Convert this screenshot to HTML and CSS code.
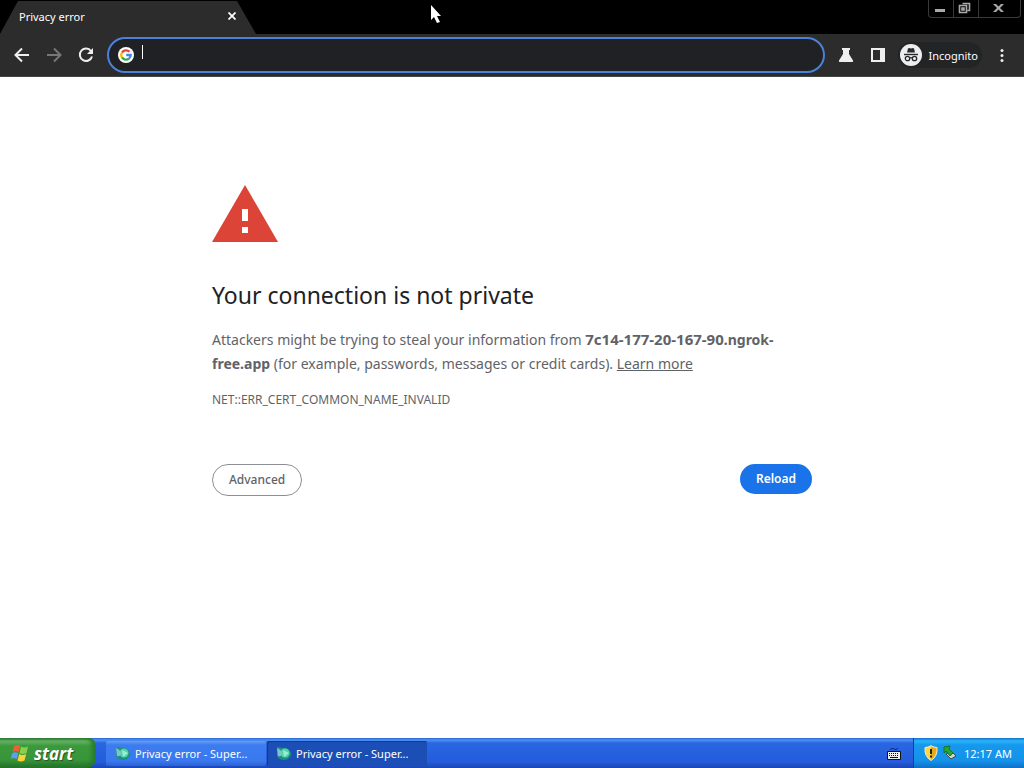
FILE: index.html
```html
<!DOCTYPE html>
<html lang="en">
<head>
<meta charset="utf-8">
<title>Privacy error</title>
<link rel="stylesheet" href="styles.css">
</head>
<body class="desktop">
<header class="tab-strip">
  <div class="tab">
    <span class="tab-title">Privacy error</span>
    <button class="tab-close" aria-label="Close tab"><svg width="8" height="8" viewBox="0 0 8 8"><path d="M.5.5l7 7M7.5.5l-7 7" stroke="#fff" stroke-width="1.7"/></svg></button>
  </div>
  <div class="window-controls">
    <button class="win-btn" aria-label="Minimize"><svg width="24" height="16" viewBox="0 0 24 16"><path d="M6 9h10v3H6z" fill="#aaa"/></svg></button>
    <button class="win-btn" aria-label="Restore"><svg width="24" height="16" viewBox="0 0 24 16"><path d="M8.500 3.500h7v7h-2M5.500 5.500h7v7h-7zM8 8h2v2H8z" fill="none" stroke="#aaa" stroke-width="1.6"/></svg></button>
    <button class="win-btn win-close" aria-label="Close"><svg width="41" height="16" viewBox="0 0 41 16"><path d="M14 4h3l2.500 2.500L22 4h3l-4 4 4 4h-3l-2.500-2.500L17 12h-3l4-4z" fill="#aaa"/></svg></button>
  </div>
</header>
<nav class="toolbar">
  <button class="tool" aria-label="Back"><svg width="24" height="24" viewBox="0 0 24 24"><path d="M19 12H6M12 5.500L5.500 12l6.500 6.500" fill="none" stroke="#eee" stroke-width="2"/></svg></button>
  <button class="tool" aria-label="Forward"><svg width="24" height="24" viewBox="0 0 24 24"><path d="M5 12h13M12 5.500l6.500 6.500-6.500 6.500" fill="none" stroke="#777" stroke-width="2"/></svg></button>
  <button class="tool" aria-label="Reload page"><svg width="24" height="24" viewBox="0 0 24 24"><path d="M17 8A6.200 6.200 0 1 0 18 13.500" fill="none" stroke="#eee" stroke-width="2"/><path d="M19 5v6h-6z" fill="#eee"/></svg></button>
  <label class="omnibox">
    <svg class="google" width="16" height="16" viewBox="0 0 16 16"><circle cx="8" cy="8" r="8" fill="#fff"/><g fill="none" stroke-width="2.300"><path d="M11.500 4.800A4.700 4.700 0 0 0 4 5.600" stroke="#ea4335"/><path d="M4 5.500a4.700 4.700 0 0 0 0 5" stroke="#fbbc05"/><path d="M4 10.400a4.700 4.700 0 0 0 7 1.200" stroke="#34a853"/><path d="M11 11.600A4.700 4.700 0 0 0 12.700 8H8.200" stroke="#4285f4"/></g></svg>
    <input class="address" type="text" aria-label="Address and search bar" autofocus>
    <span class="caret"></span>
  </label>
  <button class="tool" aria-label="Experiments"><svg width="24" height="24" viewBox="0 0 24 24"><path d="M8 5h8v2h-1v4l4 6.500q.7 1.500-1 1.500H6q-1.700 0-1-1.500L9 11V7H8z" fill="#eee"/></svg></button>
  <button class="tool" aria-label="Side panel"><svg width="24" height="24" viewBox="0 0 24 24"><path d="M5 5h14v14H5zM7 7v10h7V7z" fill="#eee" fill-rule="evenodd"/></svg></button>
  <button class="profile">
    <svg width="22" height="22" viewBox="0 0 22 22"><circle cx="11" cy="11" r="11" fill="#eee"/><path d="M8 4.500l1-.5 2 .5 2-.5 1 .5 1 4H7z" fill="#292a2d"/><path d="M4 10.500h14" stroke="#292a2d" stroke-width="1.400"/><g fill="none" stroke="#292a2d" stroke-width="1.300"><circle cx="7.500" cy="14.500" r="2.200"/><circle cx="14.500" cy="14.500" r="2.200"/><path d="M9.700 14q1.300-.7 2.600 0"/></g></svg>
    <span>Incognito</span>
  </button>
  <button class="tool menu" aria-label="Menu"><svg width="24" height="24" viewBox="0 0 24 24" fill="#eee"><circle cx="12" cy="7.500" r="1.500"/><circle cx="12" cy="12.500" r="1.500"/><circle cx="12" cy="17.500" r="1.500"/></svg></button>
</nav>
<main class="page">
  <div class="interstitial">
    <svg class="warning" width="66" height="57" viewBox="0 0 66 57"><path d="M33 0l33 57H0z" fill="#db4437"/><path d="M30 24h6v12h-6zM30 42h6v6h-6z" fill="#fff"/></svg>
    <h1 class="heading">Your connection is not private</h1>
    <p class="message">Attackers might be trying to steal your information from <strong><span class="host-id">7c14-177-20-167-90</span>.ngrok-free.app</strong> (for example, passwords, messages or credit cards). <a class="learn" href="#">Learn more</a></p>
    <p class="code">NET::ERR_CERT_COMMON_NAME_INVALID</p>
    <div class="actions">
      <button class="pill secondary">Advanced</button>
      <button class="pill primary">Reload</button>
    </div>
  </div>
</main>
<footer class="taskbar">
  <button class="start">
    <svg width="20" height="20" viewBox="0 0 20 20"><path d="M4 3q4-2 6 0L8.500 9q-3-2-6 0z" fill="#ee6032"/><path d="M11 3.500q3 2 7 0L16.500 10q-4 2-7 0z" fill="#8bd04a"/><path d="M2.200 10.200q3-2 6 0L6.700 16q-3-2-6 0z" fill="#609cf0"/><path d="M9.200 11q3 2 7 0L14.500 17.500q-4 2-7 0z" fill="#f8d33c"/></svg>
    <span>start</span>
  </button>
  <div class="tasks">
    <button class="task"><svg width="16" height="16" viewBox="0 0 16 16"><path d="M1 1q3 0 5 1 5-1 8 3 2 3 1 4-2 5-7 5-5 0-7-4z" fill="#1d8f80"/><circle cx="9" cy="7" r="4.500" fill="#4fd2ae"/><path d="M7 4l6 3-5 4z" fill="#96f0cf"/><path d="M1 2q5 2 5 6-1 3-4 2z" fill="#7fc4c8"/></svg><span>Privacy error - Super...</span></button>
    <button class="task active"><svg width="16" height="16" viewBox="0 0 16 16"><path d="M1 1q3 0 5 1 5-1 8 3 2 3 1 4-2 5-7 5-5 0-7-4z" fill="#1d8f80"/><circle cx="9" cy="7" r="4.500" fill="#4fd2ae"/><path d="M7 4l6 3-5 4z" fill="#96f0cf"/><path d="M1 2q5 2 5 6-1 3-4 2z" fill="#7fc4c8"/></svg><span>Privacy error - Super...</span></button>
  </div>
  <button class="keyboard" aria-label="Keyboard"><svg width="14" height="14" viewBox="0 0 14 14"><path d="M3 3q2-3 4-1t4-1" fill="none" stroke="#172a62"/><path d="M.5 4.500h13v8H.5z" fill="#eee" stroke="#111"/><path d="M2 6.500h10M2 8.500h10" stroke="#111" stroke-dasharray="1 1"/><path d="M3 10.500h8" stroke="#111"/></svg></button>
  <div class="tray">
    <svg width="14" height="16" viewBox="0 0 14 16"><path d="M7 .7Q10 2.500 13 2.500q.8 9-6 13-6.800-4-6-13Q4 2.500 7 .7z" fill="#ffd640" stroke="#f2edcf"/><path d="M7 1.500q3 1.500 5.500 1.500 0 8-5.500 12z" fill="#e5a91b"/><path d="M6 4h2v5H6zM6 10.500h2v2H6z" fill="#222"/></svg>
    <svg width="14" height="16" viewBox="0 0 14 16"><path d="M3 9l5 5 5-3-4-4z" fill="#cdd5cf" stroke="#3d4a56"/><path d="M1 2l6-1-1 3 4 4-3 3-4-5-2 2z" fill="#28a62f" stroke="#147428"/></svg>
    <time class="clock">12:17 AM</time>
  </div>
</footer>
<svg class="cursor" width="12" height="20" viewBox="0 0 12 20"><path d="M1 1v15l3-3 3 6 3-1-3-6h4z" fill="#fff"/></svg>
</body>
</html>
```
FILE: styles.css
```css
* { box-sizing: border-box; }
.desktop {
  margin: 0;
  min-height: 100vh;
  display: flex;
  flex-direction: column;
  background: #fff;
  font-family: "Noto Sans", sans-serif;
}
button { border: 0; padding: 0; background: none; font: inherit; color: inherit; }
svg { display: block; flex: none; }

.tab-strip {
  display: flex;
  justify-content: space-between;
  align-items: flex-start;
  height: 34px;
  background: #000;
}
.tab {
  display: flex;
  align-items: center;
  justify-content: space-between;
  width: 256px;
  height: 34px;
  padding: 0 16px 2px 19px;
  background: #2c2c2c;
  clip-path: polygon(18px 1px, 237px 1px, 256px 34px, 0 34px);
  color: #fff;
  font-size: 11px;
}
.tab-close { padding: 4px; }
.window-controls {
  display: flex;
  height: 18px;
  margin-right: 3px;
  border: 1px solid #3a3a3a;
  border-top: 0;
  border-radius: 0 0 4px 4px;
}
.win-btn { display: flex; }
.win-btn + .win-btn { border-left: 1px solid #3a3a3a; }

.toolbar {
  display: flex;
  align-items: center;
  gap: 8px;
  height: 43px;
  padding: 0 10px;
  background: #2c2c2c;
  border-bottom: 1px solid #444;
  color: #fff;
}
.omnibox {
  position: relative;
  flex: 1;
  display: flex;
  align-items: center;
  gap: 8px;
  height: 36px;
  margin: 0 1px;
  padding: 0 9px;
  border: 2px solid #4b82d8;
  border-radius: 18px;
  background: #202124;
}
.address {
  flex: 1;
  min-width: 0;
  border: 0;
  outline: 0;
  padding: 0;
  background: none;
  color: #fff;
  caret-color: transparent;
  font: inherit;
  font-size: 14px;
}
.caret {
  position: absolute;
  left: 33px;
  top: 6px;
  width: 1px;
  height: 14px;
  background: #fff;
}
.profile {
  display: flex;
  align-items: center;
  gap: 7px;
  height: 26px;
  padding: 0 4px 0 2px;
  border-radius: 13px;
  background: #232426;
  font-size: 11px;
}

.page {
  flex: 1;
  padding: 108px 24px 48px;
}
.interstitial {
  max-width: 600px;
  margin: 0 auto;
  color: #5f6368;
}
.heading {
  margin: 37px 0 16px;
  color: #202124;
  font-size: 23px;
  font-weight: 400;
  line-height: 32px;
}
.message { margin: 0; font-size: 14px; line-height: 24px; }
.host-id { font-size: 15px; }
.learn { color: inherit; }
.code { margin: 12px 0 0; font-size: 12px; line-height: 24px; }
.actions {
  display: flex;
  justify-content: space-between;
  align-items: flex-start;
  margin-top: 52px;
}
.pill {
  height: 30px;
  padding: 0 16px 2px;
  border-radius: 16px;
  font-size: 12px;
  font-weight: 500;
}
.secondary { height: 32px; border: 1px solid #8c8f93; }
.primary { background: #1a73e8; color: #fff; font-weight: 600; }

.taskbar {
  display: flex;
  align-items: stretch;
  height: 30px;
  background: linear-gradient(#2a63cf 0, #4c93f5 2px, #2a66e2 5px, #245cdb 24px, #1b46b4 30px);
  color: #fff;
  font-size: 11px;
}
.start {
  display: flex;
  align-items: center;
  gap: 4px;
  width: 96px;
  padding-left: 10px;
  border-radius: 0 8px 10px 0;
  background: linear-gradient(#2b7230 0, #68b568 3px, #3b983b 8px, #38953a 22px, #226f29 30px);
  box-shadow: inset -4px 0 4px #267b2b;
  font-family: "Open Sans", sans-serif;
  font-size: 17px;
  font-style: italic;
  font-weight: 700;
  text-shadow: 1px 1px 1px #235523;
}
.tasks { flex: 1; display: flex; gap: 1px; padding: 3px 0 2px 10px; }
.task {
  display: flex;
  align-items: center;
  gap: 4px;
  width: 160px;
  padding: 0 9px;
  border-radius: 2px;
  background: linear-gradient(#679cf5 0, #3d7bf0 4px, #3a78ed 20px, #2b61d5 25px);
}
.active { background: #1c4fb5; box-shadow: inset 1px 1px 1px #14398c; }
.keyboard { padding: 2px 12px 0; }
.tray {
  display: flex;
  align-items: center;
  gap: 5px;
  padding: 0 12px 0 10px;
  border-left: 1px solid #153e9c;
  background: linear-gradient(#1670d0 0, #29b5f7 3px, #1698ed 7px, #1492e9 23px, #116fc4 30px);
}
.clock { margin-left: 2px; }
.cursor { position: absolute; left: 430px; top: 4px; }
```
